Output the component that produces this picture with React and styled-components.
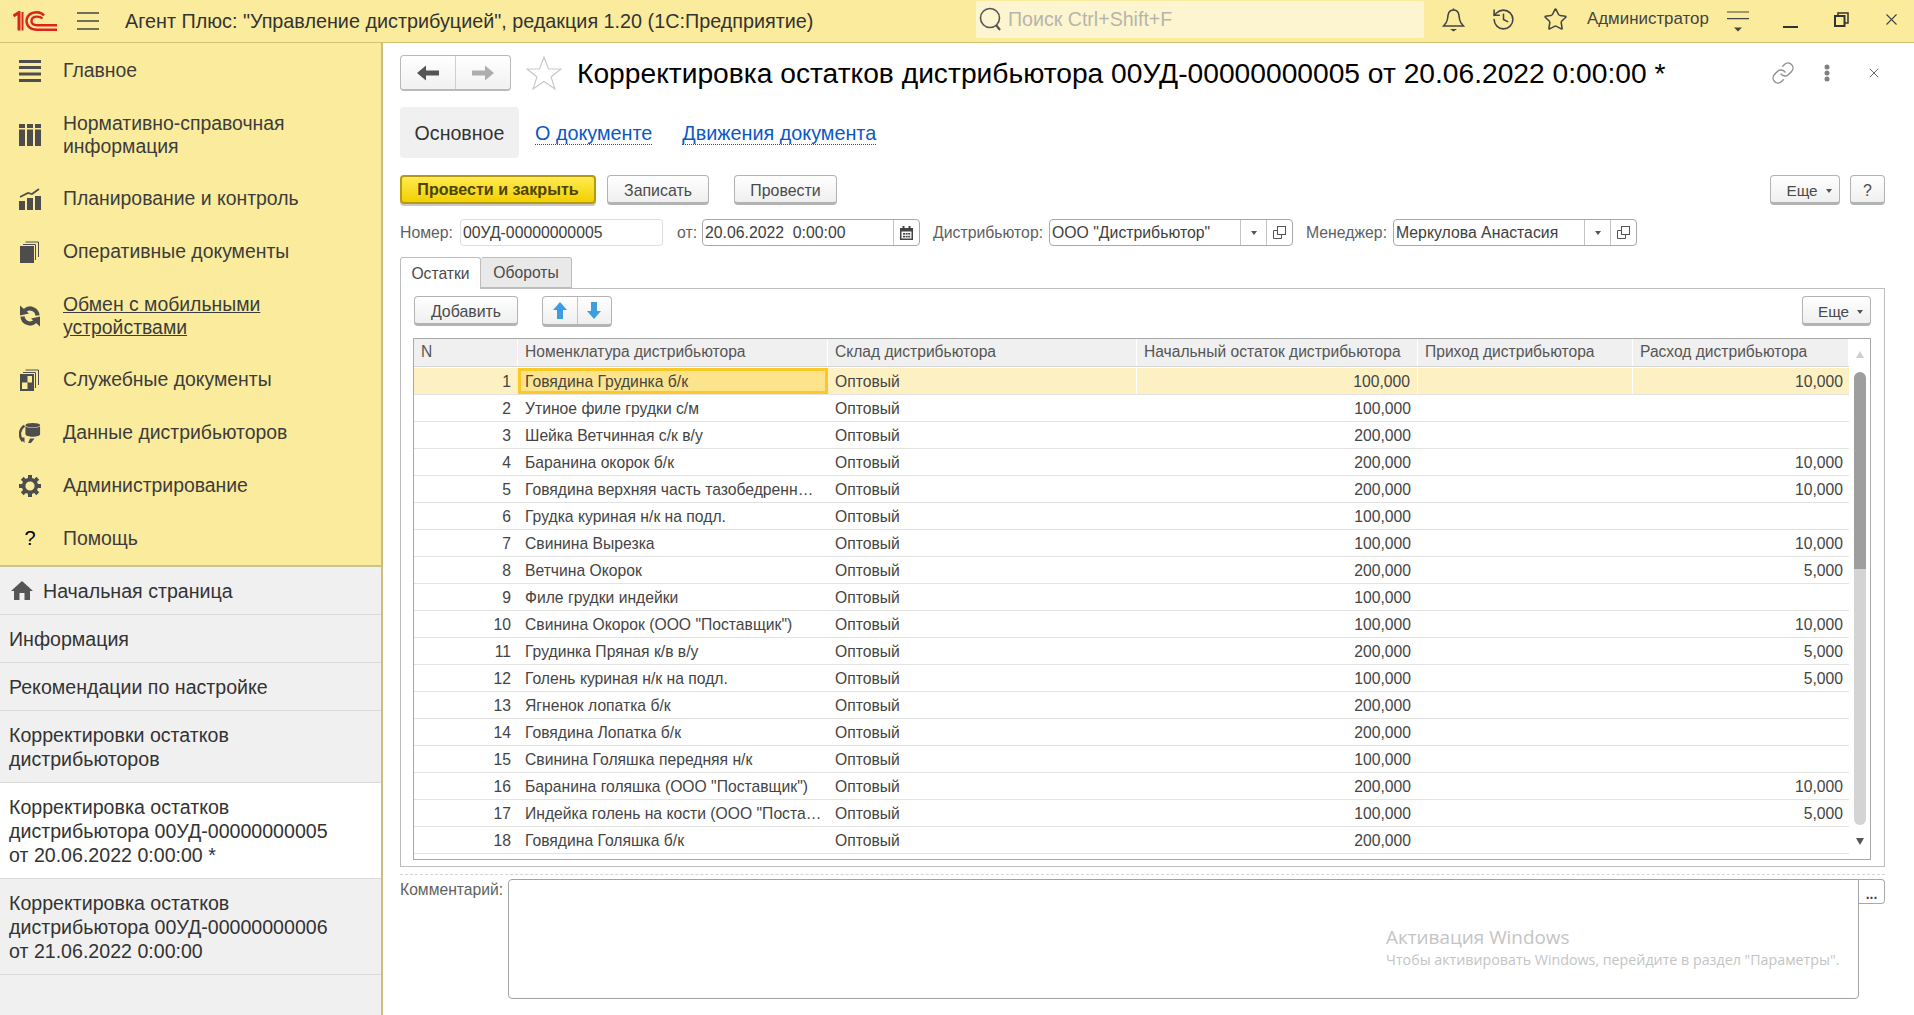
import React from "react";
import styled, { createGlobalStyle } from "styled-components";
import { History, Star, Link as LinkIcon, X } from "lucide-react";

const GlobalStyle = createGlobalStyle`
  html, body {
    margin: 0;
    height: 100%;
    background: #fff;
    font-family: "Liberation Sans", Arial, sans-serif;
    overflow: hidden;
  }
  * { box-sizing: border-box; }
`;

const Page = styled.div`
  width: 1914px;
  height: 1015px;
  display: flex;
  flex-direction: column;
`;

const TopBar = styled.header`
  height: 43px;
  flex: none;
  display: flex;
  align-items: center;
  background: #fbec9d;
  border-bottom: 1px solid #cfc273;
  color: #3c3c3c;
`;

const Logo = styled.svg`
  margin-left: 13px;
  width: 44px;
  height: 20px;
  flex: none;
`;

const Burger = styled.svg`
  margin-left: 20px;
  width: 22px;
  height: 18px;
  flex: none;
`;

const AppTitle = styled.div`
  margin-left: 26px;
  flex: 1;
  min-width: 0;
  font-size: 19.8px;
  white-space: nowrap;
  color: #333;
`;

const SearchBox = styled.div`
  width: 448px;
  height: 37px;
  margin-bottom: 4px;
  flex: none;
  display: flex;
  align-items: center;
  gap: 5px;
  padding-left: 3px;
  background: #fdf5cf;
  border-radius: 2px;
  color: #b5b5ac;
  font-size: 19.6px;
`;

const TopIcon = styled.span`
  display: inline-flex;
  flex: none;
  margin-left: ${(p) => p.$ml}px;
  margin-right: ${(p) => p.$mr || 0}px;
  color: #444;
  margin-bottom: 3px;
`;

const UserName = styled.span`
  margin-left: 19.5px;
  margin-bottom: 5px;
  width: 120px;
  flex: none;
  font-size: 16.9px;
  color: #444;
  white-space: nowrap;
`;

const Body = styled.div`
  flex: 1;
  display: flex;
  min-height: 0;
`;

const Sidebar = styled.aside`
  width: 383px;
  flex: none;
  display: flex;
  flex-direction: column;
  background: #f0f0f0;
  border-right: 2px solid #c9be7a;
`;

const Nav = styled.nav`
  height: 524px;
  padding-top: 1px;
  background: #fbec9d;
  border-bottom: 2px solid #cbc28d;
`;

const NavItem = styled.div`
  display: flex;
  align-items: center;
  padding: 15px 10px ${(p) => (p.$tight ? 14 : 15)}px 19px;
  gap: 22px;
  font-size: 19.4px;
  line-height: 23px;
  color: #3c3c3c;
  text-decoration: ${(p) => (p.$active ? "underline" : "none")};
`;

const NavIcon = styled.span`
  width: 22px;
  height: 22px;
  flex: none;
  display: flex;
  align-items: center;
  justify-content: center;
  color: #4d4d4d;
  font-size: 20px;
`;

const OpenTab = styled.div`
  display: flex;
  align-items: center;
  gap: 10px;
  padding: 11.5px 10px 11.5px ${(p) => (p.$home ? 11 : 9)}px;
  font-size: 19.6px;
  line-height: 24px;
  color: #333;
  background: ${(p) => (p.$current ? "#fff" : "#f0f0f0")};
  border-bottom: 1px solid #d9d9d9;
`;

const Main = styled.main`
  flex: 1;
  min-width: 0;
  padding: 12px 29px 0 17px;
  display: flex;
  flex-direction: column;
`;

const TitleRow = styled.div`
  height: 36px;
  display: flex;
  align-items: center;
`;

const NavGroup = styled.div`
  width: 111px;
  height: 36px;
  flex: none;
  display: flex;
  border: 1px solid #b9b9b9;
  border-bottom-width: 2px;
  border-radius: 4px;
  background: linear-gradient(#fff, #f1f1f1);
`;

const NavButton = styled.span`
  flex: 1;
  display: flex;
  align-items: center;
  justify-content: center;
  & + & {
    border-left: 1px solid #cfcfcf;
  }
`;

const DocStar = styled.svg`
  margin-left: 15px;
  width: 36px;
  height: 34px;
  flex: none;
`;

const DocTitle = styled.h1`
  margin: 0 0 0 15px;
  padding-top: 1px;
  flex: 1;
  font-size: 28.2px;
  font-weight: 400;
  color: #000;
  white-space: nowrap;
`;

const TitleTool = styled.span`
  display: inline-flex;
  flex: none;
  margin-left: ${(p) => p.$ml}px;
  margin-right: ${(p) => p.$mr || 0}px;
  color: #8e8e8e;
`;

const PageTabs = styled.div`
  margin-top: 16px;
  height: 51px;
  display: flex;
  align-items: center;
`;

const PageTabCurrent = styled.div`
  width: 119px;
  height: 51px;
  display: flex;
  align-items: center;
  justify-content: center;
  padding-top: 1px;
  border-radius: 4px;
  background: #f0f0f0;
  font-size: 19.6px;
  color: #333;
`;

const PageLink = styled.a`
  margin-left: ${(p) => p.$ml}px;
  margin-top: 2px;
  font-size: 19.8px;
  line-height: 21px;
  color: #0b57c8;
  border-bottom: 1px dotted #0b57c8;
`;

const Toolbar = styled.div`
  margin-top: ${(p) => p.$mt || 17}px;
  height: 30px;
  display: flex;
  align-items: flex-start;
`;

const Button = styled.button`
  width: ${(p) => p.$w}px;
  height: 30px;
  margin-left: ${(p) => p.$ml || 0}px;
  padding: 3px 0 0;
  flex: none;
  display: inline-flex;
  align-items: center;
  justify-content: center;
  gap: 6px;
  font-family: inherit;
  font-size: 15.9px;
  color: #4a4a4a;
  background: linear-gradient(#fff, #efefef);
  border: 1px solid #b3b3b3;
  border-bottom: 3px solid #b3b3b3;
  border-radius: 4px;
`;

const PrimaryButton = styled(Button)`
  padding: 0;
  font-size: 16.1px;
  font-weight: 700;
  color: #4d4300;
  background: linear-gradient(#ffea50, #f2d000);
  border: 2px solid #b59a16;
  border-bottom: 2px solid #b59a16;
  box-shadow: 0 2px 0 #c9c9c9;
  height: 29px;
`;

const MenuButton = styled(Button)`
  padding-left: 8px;
  gap: 8px;
  font-size: 15.3px;
`;

const Caret = styled.i`
  width: 0;
  height: 0;
  border-left: 3px solid transparent;
  border-right: 3px solid transparent;
  border-top: 4px solid #555;
`;

const Push = styled.div`
  flex: 1;
`;

const FieldRow = styled.div`
  margin-top: 14px;
  height: 27px;
  display: flex;
  align-items: center;
`;

const FieldLabel = styled.label`
  width: ${(p) => p.$w}px;
  margin-left: ${(p) => p.$ml || 0}px;
  flex: none;
  font-size: 15.8px;
  color: #5f5f5f;
  white-space: nowrap;
`;

const Field = styled.div`
  width: ${(p) => p.$w}px;
  height: 27px;
  flex: none;
  display: flex;
  border: 1px solid ${(p) => (p.$plain ? "#dedede" : "#a9a9a9")};
  border-radius: 4px;
  font-size: 15.8px;
  color: #404040;
`;

const FieldValue = styled.span`
  flex: 1;
  min-width: 0;
  padding-left: 2px;
  line-height: 25px;
  white-space: pre;
`;

const FieldAction = styled.span`
  width: 26px;
  flex: none;
  display: flex;
  align-items: center;
  justify-content: center;
  border-left: 1px solid #c4c4c4;
`;

const SubTabs = styled.div`
  margin-top: 11px;
  height: 31px;
  display: flex;
  flex: none;
  position: relative;
  z-index: 1;
`;

const SubTab = styled.div`
  width: ${(p) => p.$w}px;
  height: ${(p) => (p.$active ? 32 : 31)}px;
  display: flex;
  align-items: center;
  justify-content: center;
  font-size: 15.7px;
  color: #4a4a4a;
  background: ${(p) => (p.$active ? "#fff" : "#e9e9e9")};
  border: 1px solid #bdbdbd;
  border-bottom: ${(p) => (p.$active ? "none" : "1px solid #bdbdbd")};
  border-left: ${(p) => (p.$active ? "1px solid #bdbdbd" : "none")};
  border-radius: 3px 3px 0 0;
`;

const TabPanel = styled.section`
  height: 579px;
  flex: none;
  padding: 6px 13px 7px 12px;
  border: 1px solid #bdbdbd;
`;

const MoveGroup = styled.div`
  width: 70px;
  height: 31px;
  margin-left: 24px;
  display: flex;
  background: linear-gradient(#fff, #efefef);
  border: 1px solid #b3b3b3;
  border-bottom: 3px solid #b3b3b3;
  border-radius: 4px;
`;

const MoveButton = styled.span`
  flex: 1;
  display: flex;
  align-items: center;
  justify-content: center;
  & + & {
    border-left: 1px solid #c4c4c4;
  }
`;

const Grid = styled.div`
  margin-top: 12px;
  height: 522px;
  display: flex;
  border: 1px solid #a9a9a9;
  overflow: hidden;
`;

const Rows = styled.div`
  width: 1435px;
  flex: none;
`;

const columns = "104px 310px 309px 281px 215px 216px";

const HeadRow = styled.div`
  display: grid;
  grid-template-columns: ${columns};
  height: 28px;
  margin-bottom: 1px;
  background: #f0f0f0;
  border-bottom: 1px solid #d4d4d4;
`;

const HeadCell = styled.div`
  padding: 0 6px 0 7px;
  font-size: 15.6px;
  line-height: 26px;
  color: #555;
  white-space: nowrap;
  overflow: hidden;
  border-right: 1px solid #fff;
`;

const Row = styled.div`
  display: grid;
  grid-template-columns: ${columns};
  height: 27px;
  background: ${(p) => (p.$selected ? "#fdf1c4" : "#fff")};
  border-bottom: 1px solid #e3e3e3;
`;

const Cell = styled.div`
  padding: 0 ${(p) => p.$pr || 6}px 0 7px;
  font-size: 15.7px;
  line-height: 27px;
  color: #444;
  text-align: ${(p) => (p.$right ? "right" : "left")};
  white-space: nowrap;
  overflow: hidden;
  ${(p) => p.$selected && "border-right: 1px solid #fff;"}
  ${(p) =>
    p.$focus &&
    `background: #fde48c;
     border: 3px solid #fbc926;
     padding-left: 4px;
     line-height: 21px;`}
`;

const ScrollBar = styled.div`
  flex: 1;
  display: flex;
  flex-direction: column;
  align-items: center;
`;

const ScrollArrow = styled.svg`
  width: 8px;
  height: 7px;
  flex: none;
  margin-top: ${(p) => p.$mt}px;
  margin-bottom: ${(p) => p.$mb}px;
`;

const Thumb = styled.div`
  width: 12px;
  height: ${(p) => p.$h}px;
  flex: none;
  background: ${(p) => (p.$light ? "#d4d4d4" : "#9e9e9e")};
  border-radius: ${(p) => (p.$light ? "0 0 6px 6px" : "6px 6px 0 0")};
`;

const CommentLine = styled.div`
  margin-top: 7px;
  border-top: 1px dashed #d4d4d4;
`;

const CommentRow = styled.div`
  margin-top: 4px;
  display: flex;
  align-items: flex-start;
`;

const CommentLabel = styled.label`
  width: 108px;
  padding-top: 1px;
  flex: none;
  font-size: 15.7px;
  line-height: 19px;
  color: #5f5f5f;
`;

const CommentBox = styled.div`
  position: relative;
  width: 1351px;
  height: 120px;
  flex: none;
  border: 1px solid #a3a3a3;
  border-radius: 4px 0 4px 4px;
`;

const MoreButton = styled.div`
  width: 26px;
  height: 25px;
  flex: none;
  display: flex;
  align-items: flex-end;
  justify-content: center;
  padding-bottom: 2px;
  border: 1px solid #a9a9a9;
  border-left: none;
  border-radius: 0 4px 4px 0;
  font-size: 14px;
  font-weight: 700;
  line-height: 14px;
  color: #444;
`;

const Watermark = styled.div`
  position: absolute;
  left: 877px;
  top: 44px;
  font-family: "Open Sans", sans-serif;
  color: #c4c4c4;
  white-space: nowrap;
`;

const WatermarkTitle = styled.div`
  font-size: 18.9px;
  line-height: 27px;
`;

const WatermarkText = styled.div`
  font-size: 14.25px;
  line-height: 18px;
`;

const navItems = [
  { key: "main", label: ["Главное"] },
  { key: "ref", label: ["Нормативно-справочная", "информация"], tight: true },
  { key: "plan", label: ["Планирование и контроль"] },
  { key: "ops", label: ["Оперативные документы"] },
  { key: "sync", label: ["Обмен с мобильными", "устройствами"], active: true, tight: true },
  { key: "svc", label: ["Служебные документы"] },
  { key: "data", label: ["Данные дистрибьюторов"] },
  { key: "admin", label: ["Администрирование"] },
  { key: "help", label: ["Помощь"] },
];

const rows = [
  ["Говядина Грудинка б/к", "100,000", "10,000"],
  ["Утиное филе грудки с/м", "100,000", ""],
  ["Шейка Ветчинная с/к в/у", "200,000", ""],
  ["Баранина окорок б/к", "200,000", "10,000"],
  ["Говядина верхняя часть тазобедренн…", "200,000", "10,000"],
  ["Грудка куриная н/к на подл.", "100,000", ""],
  ["Свинина Вырезка", "100,000", "10,000"],
  ["Ветчина Окорок", "200,000", "5,000"],
  ["Филе грудки индейки", "100,000", ""],
  ['Свинина Окорок (ООО "Поставщик")', "100,000", "10,000"],
  ["Грудинка Пряная к/в в/у", "200,000", "5,000"],
  ["Голень куриная н/к на подл.", "100,000", "5,000"],
  ["Ягненок лопатка б/к", "200,000", ""],
  ["Говядина Лопатка б/к", "200,000", ""],
  ["Свинина Голяшка передняя н/к", "100,000", ""],
  ['Баранина голяшка (ООО "Поставщик")', "200,000", "10,000"],
  ['Индейка голень на кости (ООО "Поста…', "100,000", "5,000"],
  ["Говядина Голяшка б/к", "200,000", ""],
];

const fill = "#4d4d4d";

function NavGlyph({ name }) {
  if (name === "main")
    return (
      <svg width="22" height="22" viewBox="0 0 22 22" fill={fill}>
        <rect x="0" y="0" width="22" height="3" />
        <rect x="0" y="6" width="22" height="3" />
        <rect x="0" y="12.5" width="22" height="3" />
        <rect x="0" y="19" width="22" height="3" />
      </svg>
    );
  if (name === "ref")
    return (
      <svg width="22" height="22" viewBox="0 0 22 22" fill={fill}>
        <rect x="0" y="0" width="6" height="4" />
        <rect x="8" y="0" width="6" height="4" />
        <rect x="16" y="0" width="6" height="4" />
        <rect x="0" y="5.5" width="6" height="16.5" />
        <rect x="8" y="5.5" width="6" height="16.5" />
        <rect x="16" y="5.5" width="6" height="16.5" />
      </svg>
    );
  if (name === "plan")
    return (
      <svg width="22" height="22" viewBox="0 0 22 22" fill={fill}>
        <rect x="0" y="13" width="6" height="9" />
        <rect x="8" y="10" width="6" height="12" />
        <rect x="16" y="8" width="6" height="14" />
        <path d="M1 9 L9 5 L13 6 L20 1" stroke={fill} strokeWidth="1.8" fill="none" />
      </svg>
    );
  if (name === "ops")
    return (
      <svg width="20" height="22" viewBox="0 0 20 22" fill={fill}>
        <rect x="0" y="5" width="14" height="17" />
        <path d="M3 3.5 H15.5 V19" stroke={fill} fill="none" />
        <path d="M5.5 1 H18.5 V16" stroke={fill} fill="none" />
      </svg>
    );
  if (name === "sync")
    return (
      <svg width="22" height="22" viewBox="0 0 22 22" fill={fill}>
        <g>
          <path d="M18.5 10.5 A7.5 7.5 0 0 0 6 5.5" stroke={fill} strokeWidth="4.2" fill="none" />
          <path d="M1 0.5 L10 8.5 L1 10.5 Z" />
        </g>
        <g transform="rotate(180 11 11)">
          <path d="M18.5 10.5 A7.5 7.5 0 0 0 6 5.5" stroke={fill} strokeWidth="4.2" fill="none" />
          <path d="M1 0.5 L10 8.5 L1 10.5 Z" />
        </g>
      </svg>
    );
  if (name === "svc")
    return (
      <svg width="20" height="22" viewBox="0 0 20 22" fill={fill}>
        <rect x="0" y="5" width="14" height="17" />
        <rect x="7.5" y="7" width="4.5" height="6.5" fill="#fbec9d" />
        <rect x="2" y="13.5" width="5.5" height="6.5" fill="#fbec9d" />
        <path d="M3 3.5 H15.5 V19" stroke={fill} fill="none" />
        <path d="M5.5 1 H18.5 V16" stroke={fill} fill="none" />
      </svg>
    );
  if (name === "data")
    return (
      <svg width="24" height="22" viewBox="0 0 24 22" fill={fill}>
        <ellipse cx="15" cy="2.5" rx="8" ry="2.5" />
        <path d="M7 4 C9 6 21 6 23 4 V12 C23 14 19 15 15 15 C11 15 7 14 7 12 Z" />
        <path d="M6 3 C1 6 -1 14 4 20" stroke={fill} strokeWidth="2.6" fill="none" />
        <path d="M1 16 L6 16 L6 22 Z" />
        <path d="M12 17 L17 17 L13 22 L10 22 Z" />
      </svg>
    );
  if (name === "admin")
    return (
      <svg width="22" height="22" viewBox="0 0 22 22" fill={fill}>
        <circle cx="11" cy="11" r="6.4" fill="none" stroke={fill} strokeWidth="3.6" />
        {[0, 45, 90, 135, 180, 225, 270, 315].map((deg) => (
          <rect key={deg} x="9" y="0" width="4" height="4" transform={`rotate(${deg} 11 11)`} />
        ))}
      </svg>
    );
  return <span style={{ color: "#000" }}>?</span>;
}

function SmallCopy() {
  return (
    <svg width="13" height="13" viewBox="0 0 13 13" fill="none" stroke="#555">
      <rect x="4.5" y="0.5" width="8" height="8" />
      <path d="M4 4.5 H0.5 V12.5 H8.5 V9" />
    </svg>
  );
}

export default function App() {
  return (
    <Page>
      <GlobalStyle />
      <TopBar>
        <Logo viewBox="0 0 44 20" fill="none" stroke="#d9261c">
          <path d="M0.5 5 L6 1.5 V19.5 M1 19 H1" strokeWidth="3" />
          <path d="M9.5 1 V19.5" strokeWidth="2" />
          <path d="M31 4.5 C29 2 26.5 1.2 24 1.2 C17.5 1.2 13.5 5 13.5 10 C13.5 15 17.5 18.7 24 18.7 H44" strokeWidth="2.4" />
          <path d="M29.5 7.5 C28 6 26 5.6 24 5.6 C20.5 5.6 18.5 7.5 18.5 10 C18.5 12.5 20.5 14.2 24 14.2 H44" strokeWidth="2.4" />
        </Logo>
        <Burger viewBox="0 0 22 18" stroke="#444" strokeWidth="1.4">
          <path d="M0 1 H22 M0 9 H22 M0 17 H22" />
        </Burger>
        <AppTitle>Агент Плюс: "Управление дистрибуцией", редакция 1.20 (1С:Предприятие)</AppTitle>
        <SearchBox>
          <svg width="24" height="24" viewBox="0 0 24 24" fill="none" stroke="#555" strokeWidth="1.6">
            <circle cx="11" cy="11" r="9.5" />
            <path d="M17 18 L21 23" strokeWidth="2.2" />
          </svg>
          Поиск Ctrl+Shift+F
        </SearchBox>
        <TopIcon $ml={18}>
          <svg width="23" height="24" viewBox="0 0 23 24" fill="none" stroke="#444" strokeWidth="1.5">
            <path d="M11.5 2 C6.5 2 6 6 5.5 11 C5.2 14 3.5 16 1.5 18 H21.5 C19.5 16 17.8 14 17.5 11 C17 6 16.5 2 11.5 2 Z" />
            <path d="M11.5 0.5 V2" />
            <path d="M8 21 H15 L11.5 23.5 Z" fill="#444" stroke="none" />
          </svg>
        </TopIcon>
        <TopIcon $ml={26}>
          <History size={25} strokeWidth={1.5} />
        </TopIcon>
        <TopIcon $ml={26.5}>
          <Star size={25} strokeWidth={1.5} />
        </TopIcon>
        <UserName>Администратор</UserName>
        <TopIcon $ml={20}>
          <svg width="22" height="24" viewBox="0 0 22 24" stroke="#444" strokeWidth="1.2">
            <path d="M0 4 H22 M0 10.7 H22" />
            <path d="M7 19.5 H15 L11 23.5 Z" fill="#444" stroke="none" />
          </svg>
        </TopIcon>
        <TopIcon $ml={34}>
          <svg width="15" height="16" viewBox="0 0 15 16" stroke="#333" strokeWidth="2">
            <path d="M0 15 H15" />
          </svg>
        </TopIcon>
        <TopIcon $ml={36}>
          <svg width="15" height="15" viewBox="0 0 15 15" fill="none" stroke="#333" strokeWidth="1.5">
            <rect x="1" y="4" width="9.5" height="10" strokeWidth="2" />
            <path d="M4 4 V1 H14 V11 H11" />
          </svg>
        </TopIcon>
        <TopIcon $ml={32.5} $mr={13.5}>
          <X size={19} strokeWidth={1.4} />
        </TopIcon>
      </TopBar>
      <Body>
        <Sidebar>
          <Nav>
            {navItems.map((item) => (
              <NavItem key={item.key} $active={item.active} $tight={item.tight}>
                <NavIcon>
                  <NavGlyph name={item.key} />
                </NavIcon>
                <div>
                  {item.label.map((line) => (
                    <div key={line}>{line}</div>
                  ))}
                </div>
              </NavItem>
            ))}
          </Nav>
          <OpenTab $home>
            <svg width="22" height="19" viewBox="0 0 22 19" fill="#555">
              <path d="M11 0 L22 10 H19 V19 H13.5 V12 H8.5 V19 H3 V10 H0 Z" />
            </svg>
            Начальная страница
          </OpenTab>
          <OpenTab>Информация</OpenTab>
          <OpenTab>Рекомендации по настройке</OpenTab>
          <OpenTab>
            <div>
              Корректировки остатков
              <br />
              дистрибьюторов
            </div>
          </OpenTab>
          <OpenTab $current>
            <div>
              Корректировка остатков
              <br />
              дистрибьютора 00УД-00000000005
              <br />
              от 20.06.2022 0:00:00 *
            </div>
          </OpenTab>
          <OpenTab>
            <div>
              Корректировка остатков
              <br />
              дистрибьютора 00УД-00000000006
              <br />
              от 21.06.2022 0:00:00
            </div>
          </OpenTab>
        </Sidebar>
        <Main>
          <TitleRow>
            <NavGroup>
              <NavButton>
                <svg width="22" height="16" viewBox="0 0 22 16" fill="#555">
                  <path d="M0 8 L9 0.5 V5.5 H22 V10.5 H9 V15.5 Z" />
                </svg>
              </NavButton>
              <NavButton>
                <svg width="22" height="16" viewBox="0 0 22 16" fill="#adadad">
                  <path d="M22 8 L13 0.5 V5.5 H0 V10.5 H13 V15.5 Z" />
                </svg>
              </NavButton>
            </NavGroup>
            <DocStar viewBox="0 0 36 34" fill="none" stroke="#c9c9c9" strokeWidth="1.2">
              <path d="M18 1 L22.5 13 H35 L25 21 L29 33 L18 25.5 L7 33 L11 21 L1 13 H13.5 Z" />
            </DocStar>
            <DocTitle>Корректировка остатков дистрибьютора 00УД-00000000005 от 20.06.2022 0:00:00 *</DocTitle>
            <TitleTool $ml={0}>
              <LinkIcon size={24} strokeWidth={1.4} />
            </TitleTool>
            <TitleTool $ml={29}>
              <svg width="6" height="18" viewBox="0 0 6 18" fill="#808080">
                <circle cx="3" cy="3" r="2.5" />
                <circle cx="3" cy="9" r="2.5" />
                <circle cx="3" cy="15" r="2.5" />
              </svg>
            </TitleTool>
            <TitleTool $ml={36} $mr={3}>
              <X size={16} strokeWidth={1.5} color="#666" />
            </TitleTool>
          </TitleRow>
          <PageTabs>
            <PageTabCurrent>Основное</PageTabCurrent>
            <PageLink $ml={16}>О документе</PageLink>
            <PageLink $ml={30}>Движения документа</PageLink>
          </PageTabs>
          <Toolbar>
            <PrimaryButton $w={196}>Провести и закрыть</PrimaryButton>
            <Button $w={102} $ml={11}>Записать</Button>
            <Button $w={103} $ml={25}>Провести</Button>
            <Push />
            <MenuButton $w={70}>
              Еще <Caret />
            </MenuButton>
            <Button $w={35} $ml={10}>?</Button>
          </Toolbar>
          <FieldRow>
            <FieldLabel $w={60}>Номер:</FieldLabel>
            <Field $w={203} $plain>
              <FieldValue>00УД-00000000005</FieldValue>
            </Field>
            <FieldLabel $w={25} $ml={14}>от:</FieldLabel>
            <Field $w={218}>
              <FieldValue>20.06.2022  0:00:00</FieldValue>
              <FieldAction>
                <svg width="13" height="14" viewBox="0 0 13 14" fill="#444">
                  <path d="M0 2 H13 V14 H0 Z M1.5 5.5 V12.5 H11.5 V5.5 Z" fillRule="evenodd" />
                  <rect x="2.5" y="0" width="2" height="3" />
                  <rect x="8.5" y="0" width="2" height="3" />
                  <rect x="3" y="7" width="2" height="1.6" />
                  <rect x="5.6" y="7" width="2" height="1.6" />
                  <rect x="8.2" y="7" width="2" height="1.6" />
                  <rect x="3" y="9.8" width="2" height="1.6" />
                  <rect x="5.6" y="9.8" width="2" height="1.6" />
                  <rect x="8.2" y="9.8" width="2" height="1.6" />
                </svg>
              </FieldAction>
            </Field>
            <FieldLabel $w={116} $ml={13}>Дистрибьютор:</FieldLabel>
            <Field $w={244}>
              <FieldValue>ООО "Дистрибьютор"</FieldValue>
              <FieldAction>
                <Caret />
              </FieldAction>
              <FieldAction>
                <SmallCopy />
              </FieldAction>
            </Field>
            <FieldLabel $w={87} $ml={13}>Менеджер:</FieldLabel>
            <Field $w={244}>
              <FieldValue>Меркулова Анастасия</FieldValue>
              <FieldAction>
                <Caret />
              </FieldAction>
              <FieldAction>
                <SmallCopy />
              </FieldAction>
            </Field>
          </FieldRow>
          <SubTabs>
            <SubTab $w={81} $active>Остатки</SubTab>
            <SubTab $w={91}>Обороты</SubTab>
          </SubTabs>
          <TabPanel>
            <Toolbar $mt={1}>
              <Button $w={104} $ml={1}>Добавить</Button>
              <MoveGroup>
                <MoveButton>
                  <svg width="14" height="17" viewBox="0 0 14 17" fill="#3d9de0">
                    <path d="M7 0 L14 8 H10 V17 H4 V8 H0 Z" />
                  </svg>
                </MoveButton>
                <MoveButton>
                  <svg width="14" height="17" viewBox="0 0 14 17" fill="#3d9de0">
                    <path d="M7 17 L14 9 H10 V0 H4 V9 H0 Z" />
                  </svg>
                </MoveButton>
              </MoveGroup>
              <Push />
              <MenuButton $w={69}>
                Еще <Caret />
              </MenuButton>
            </Toolbar>
            <Grid>
              <Rows>
                <HeadRow>
                  <HeadCell>N</HeadCell>
                  <HeadCell>Номенклатура дистрибьютора</HeadCell>
                  <HeadCell>Склад дистрибьютора</HeadCell>
                  <HeadCell>Начальный остаток дистрибьютора</HeadCell>
                  <HeadCell>Приход дистрибьютора</HeadCell>
                  <HeadCell>Расход дистрибьютора</HeadCell>
                </HeadRow>
                {rows.map((row, i) => (
                  <Row key={i} $selected={i === 0}>
                    <Cell $right $pr={7}>{i + 1}</Cell>
                    <Cell $focus={i === 0}>{row[0]}</Cell>
                    <Cell $selected={i === 0}>Оптовый</Cell>
                    <Cell $right $pr={7} $selected={i === 0}>{row[1]}</Cell>
                    <Cell $right $selected={i === 0}></Cell>
                    <Cell $right>{row[2]}</Cell>
                  </Row>
                ))}
              </Rows>
              <ScrollBar>
                <ScrollArrow $mt={12} $mb={14} viewBox="0 0 8 7" fill="#cfcfcf">
                  <path d="M4 0 L8 7 H0 Z" />
                </ScrollArrow>
                <Thumb $h={197} />
                <Thumb $h={256} $light />
                <ScrollArrow $mt={13} $mb={0} viewBox="0 0 8 7" fill="#555">
                  <path d="M4 7 L8 0 H0 Z" />
                </ScrollArrow>
              </ScrollBar>
            </Grid>
          </TabPanel>
          <CommentLine />
          <CommentRow>
            <CommentLabel>Комментарий:</CommentLabel>
            <CommentBox>
              <Watermark>
                <WatermarkTitle>Активация Windows</WatermarkTitle>
                <WatermarkText>Чтобы активировать Windows, перейдите в раздел "Параметры".</WatermarkText>
              </Watermark>
            </CommentBox>
            <MoreButton>...</MoreButton>
          </CommentRow>
        </Main>
      </Body>
    </Page>
  );
}
